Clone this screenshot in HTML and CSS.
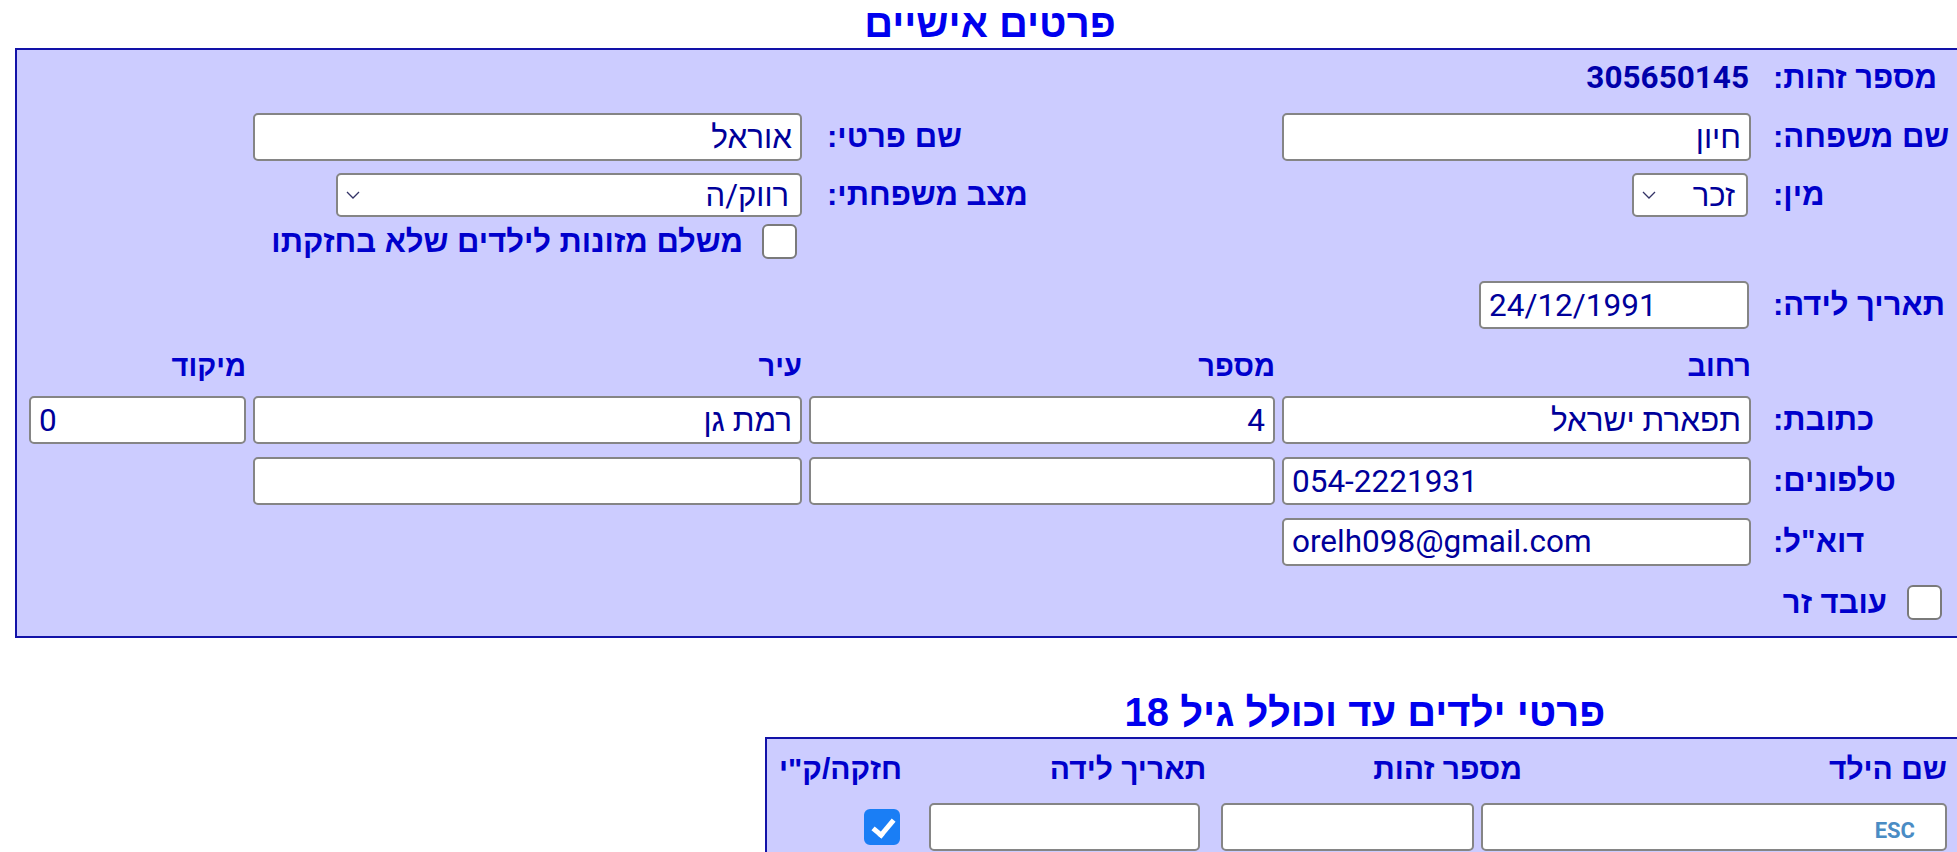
FILE: index.html
```html
<!DOCTYPE html>
<html lang="he">
<head>
<meta charset="utf-8">
<title>פרטים אישיים</title>
<link rel="stylesheet" href="styles.css">
</head>
<body>
<div class="page">
  <h1 class="title">פרטים אישיים</h1>
  <section class="box personal" dir="rtl">
    <div class="lbl r1 ca">מספר זהות:</div>
    <div class="val r1 cb">305650145</div>

    <div class="lbl r2 ca">שם משפחה:</div>
    <div class="r2 cb"><input class="field" type="text" value="חיון"></div>
    <div class="lbl lbl2 r2 cc">שם פרטי:</div>
    <div class="r2 cd"><input class="field" type="text" value="אוראל"></div>

    <div class="lbl r3 ca">מין:</div>
    <div class="r3 cb"><div class="select sel-sm"><span>זכר</span><svg class="chev" viewBox="0 0 14 8"><polyline points="1,1 7,7 13,1"/></svg></div></div>
    <div class="lbl lbl2 r3 cc">מצב משפחתי:</div>
    <div class="r3 cd"><div class="select sel-lg"><span>רווק/ה</span><svg class="chev" viewBox="0 0 14 8"><polyline points="1,1 7,7 13,1"/></svg></div></div>

    <label class="check r4 cd check-mz"><span class="tick"></span><span class="check-text">משלם מזונות לילדים שלא בחזקתו</span></label>

    <div class="lbl r5 ca">תאריך לידה:</div>
    <div class="r5 cb"><input class="field date" type="text" value="24/12/1991" dir="ltr"></div>

    <div class="head r6 cb">רחוב</div>
    <div class="head r6 cc">מספר</div>
    <div class="head r6 cd">עיר</div>
    <div class="head r6 ce">מיקוד</div>

    <div class="lbl r7 ca">כתובת:</div>
    <div class="r7 cb"><input class="field" type="text" value="תפארת ישראל"></div>
    <div class="r7 cc"><input class="field" type="text" value="4"></div>
    <div class="r7 cd"><input class="field" type="text" value="רמת גן"></div>
    <div class="r7 ce"><input class="field" type="text" value="0" dir="ltr"></div>

    <div class="lbl r8 ca">טלפונים:</div>
    <div class="r8 cb"><input class="field" type="text" value="054-2221931" dir="ltr"></div>
    <div class="r8 cc"><input class="field" type="text" value=""></div>
    <div class="r8 cd"><input class="field" type="text" value=""></div>

    <div class="lbl r9 ca">דוא"ל:</div>
    <div class="r9 cb"><input class="field" type="text" value="orelh098@gmail.com" dir="ltr"></div>

    <label class="check r10 ca check-zr"><span class="tick"></span><span class="check-text">עובד זר</span></label>
  </section>

  <div class="kids">
    <h1 class="title">פרטי ילדים עד וכולל גיל 18</h1>
    <section class="box kids-box" dir="rtl">
      <div class="khead-row">
        <div class="khead kh1">שם הילד</div>
        <div class="khead kh2">מספר זהות</div>
        <div class="khead kh3">תאריך לידה</div>
        <div class="khead kh4">חזקה/ק"י</div>
      </div>

      <div class="kcell k1"><input class="field esc" type="text" placeholder="ESC"></div>
      <div class="kcell k2"><input class="field" type="text" value=""></div>
      <div class="kcell k3"><input class="field" type="text" value=""></div>
      <div class="kcell k4 kcheck"><span class="tick checked"></span></div>
    </section>
  </div>
</div>
</body>
</html>
```

FILE: styles.css
```css
html, body {
  margin: 0;
  padding: 0;
  overflow: hidden;
  background: #ffffff;
}

body {
  font-family: Roboto, "Liberation Sans", "DejaVu Sans", sans-serif;
  color: #0000cc;
}

.page {
  width: 1950px;
  margin-left: 15px;
}

.title {
  margin: 0 0 2px 0;
  font-family: "Liberation Sans", Roboto, sans-serif;
  font-size: 40px;
  line-height: 46px;
  font-weight: bold;
  color: #0000ee;
  text-align: center;
  direction: rtl;
}

.box {
  box-sizing: border-box;
  background: #ccccff;
  border: 2px solid #1212a8;
}

/* ---------- personal details grid ---------- */
.personal {
  display: grid;
  grid-template-columns: 205px 469px 466px 549px 217px;
  grid-template-rows: 55px 64px 52px 41px 86px 36px 72px 50px 71px 51px;
  column-gap: 7px;
  padding: 0 0 8px 12px;
  align-items: center;
}

.r1 { grid-row: 1; }
.r2 { grid-row: 2; }
.r3 { grid-row: 3; }
.r4 { grid-row: 4; }
.r5 { grid-row: 5; }
.r6 { grid-row: 6; }
.r7 { grid-row: 7; }
.r8 { grid-row: 8; }
.r9 { grid-row: 9; }
.r10 { grid-row: 10; }

.ca { grid-column: 1; }
.cb { grid-column: 2; }
.cc { grid-column: 3; }
.cd { grid-column: 4; }
.ce { grid-column: 5; }

.lbl {
  font-family: "Liberation Sans", sans-serif;
  font-weight: bold;
  font-size: 31px;
  color: #0000cc;
  text-align: left;
  padding-left: 15px;
  white-space: nowrap;
}

.lbl2 {
  padding-left: 18px;
}

.val {
  font-family: Roboto, "Liberation Sans", sans-serif;
  font-weight: bold;
  font-size: 31.5px;
  color: #0000aa;
  text-align: right;
  padding-right: 2px;
}

.head {
  font-family: "Liberation Sans", sans-serif;
  font-weight: bold;
  font-size: 29px;
  color: #0000cc;
  text-align: right;
}

.field {
  display: block;
  box-sizing: border-box;
  width: 100%;
  height: 48px;
  margin: 0;
  padding: 0 8px;
  background: #ffffff;
  border: 2px solid #858585;
  border-radius: 5px;
  font-family: Roboto, "Liberation Sans", sans-serif;
  font-size: 31.5px;
  color: #00009a;
  outline: none;
}

.field[dir="ltr"] {
  text-align: left;
}

.date {
  width: 270px;
  margin-right: 2px;
}

.select {
  box-sizing: border-box;
  height: 44px;
  display: flex;
  align-items: center;
  justify-content: space-between;
  padding: 0 11px 0 8px;
  background: #ffffff;
  border: 2px solid #858585;
  border-radius: 5px;
  font-family: Roboto, "Liberation Sans", sans-serif;
  font-size: 31px;
  color: #00009a;
}

.sel-sm {
  width: 116px;
  margin-right: 3px;
}

.sel-lg {
  width: 466px;
}

.chev {
  width: 14px;
  height: 8px;
  fill: none;
  stroke: #333366;
  stroke-width: 1.3;
}

.check {
  display: flex;
  align-items: center;
  gap: 19px;
  font-family: "Liberation Sans", sans-serif;
  font-weight: bold;
  font-size: 31px;
  color: #0000cc;
  white-space: nowrap;
}

.check-mz {
  padding-right: 5px;
}

.check-zr {
  padding-right: 21px;
  gap: 20px;
}

.tick {
  flex: none;
  display: block;
  box-sizing: border-box;
  width: 35px;
  height: 35px;
  background: #ffffff;
  border: 2px solid #7a7a7a;
  border-radius: 6px;
  position: relative;
}

.tick.checked {
  background: #1a7ef5;
  border-color: #1a7ef5;
  width: 36px;
  height: 36px;
}

.tick.checked::after {
  content: "";
  position: absolute;
  left: 11px;
  top: 4px;
  width: 8px;
  height: 17px;
  border-right: 5px solid #ffffff;
  border-bottom: 5px solid #ffffff;
  transform: rotate(40deg);
}

/* ---------- kids ---------- */
.kids {
  margin-top: 51px;
  margin-left: 750px;
  width: 1200px;
}

.kids-box {
  display: grid;
  grid-template-columns: 473px 274px 295px 126px;
  grid-template-rows: 60px 48px;
  row-gap: 4px;
  padding: 0 16px 20px 12px;
  align-items: center;
}

.khead-row {
  grid-row: 1;
  grid-column: 1 / -1;
  display: flex;
  align-items: center;
}

.khead {
  font-family: "Liberation Sans", sans-serif;
  font-weight: bold;
  font-size: 30px;
  color: #0000cc;
  text-align: right;
  white-space: nowrap;
}

.kh1 { width: 436px; }
.kh2 { width: 324px; }
.kh3 { width: 312px; }
.kh4 { flex: 1; }

.kcell {
  grid-row: 2;
}

.k1 { grid-column: 1; padding-left: 7px; }
.k2 { grid-column: 2; padding-left: 21px; }
.k3 { grid-column: 3; padding-left: 24px; }
.k4 { grid-column: 4; }

.kcheck {
  display: flex;
  justify-content: flex-start;
  padding-right: 5px;
}

.esc {
  padding-right: 30px;
}

.esc::placeholder {
  color: #4a8cc4;
  font-weight: bold;
  font-size: 22px;
  opacity: 1;
}
```
